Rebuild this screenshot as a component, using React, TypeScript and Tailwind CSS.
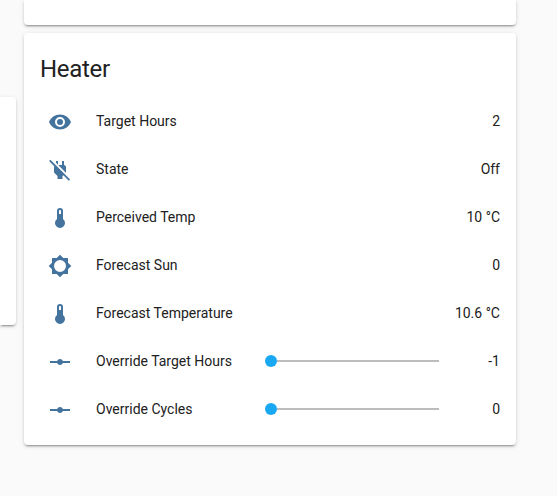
type RowData = { icon: string; name: string; value: string; slider?: boolean };

const EYE =
  'M12,9A3,3 0 0,0 9,12A3,3 0 0,0 12,15A3,3 0 0,0 15,12A3,3 0 0,0 12,9M12,17A5,5 0 0,1 7,12A5,5 0 0,1 12,7A5,5 0 0,1 17,12A5,5 0 0,1 12,17M12,4.5C7,4.5 2.73,7.61 1,12C2.73,16.39 7,19.5 12,19.5C17,19.5 21.27,16.39 23,12C21.27,7.61 17,4.5 12,4.5Z';
const PLUG_OFF =
  'M20.84 22.73L15.31 17.2L14.5 18V21H9.5V18L6 14.5V9C6 8.7 6.1 8.41 6.25 8.14L1.11 3L2.39 1.73L22.11 21.46L20.84 22.73M18 14.5V9C18 8 17 7 16 7V3H14V7H10.2L17.85 14.65L18 14.5M10 3H8V4.8L10 6.8V3Z';
const THERMOMETER =
  'M15 13V5A3 3 0 0 0 9 5V13A5 5 0 1 0 15 13M12 4A1 1 0 0 1 13 5V8H11V5A1 1 0 0 1 12 4Z';
const BRIGHTNESS =
  'M12,18A6,6 0 0,1 6,12A6,6 0 0,1 12,6A6,6 0 0,1 18,12A6,6 0 0,1 12,18M20,15.31L23.31,12L20,8.69V4H15.31L12,0.69L8.69,4H4V8.69L0.69,12L4,15.31V20H8.69L12,23.31L15.31,20H20V15.31Z';
const RAY_VERTEX =
  'M2,11H9.17C9.58,9.83 10.69,9 12,9C13.31,9 14.42,9.83 14.83,11H22V13H14.83C14.42,14.17 13.31,15 12,15C10.69,15 9.58,14.17 9.17,13H2V11Z';

const rows: RowData[] = [
  { icon: EYE, name: 'Target Hours', value: '2' },
  { icon: PLUG_OFF, name: 'State', value: 'Off' },
  { icon: THERMOMETER, name: 'Perceived Temp', value: '10 °C' },
  { icon: BRIGHTNESS, name: 'Forecast Sun', value: '0' },
  { icon: THERMOMETER, name: 'Forecast Temperature', value: '10.6 °C' },
  { icon: RAY_VERTEX, name: 'Override Target Hours', value: '-1', slider: true },
  { icon: RAY_VERTEX, name: 'Override Cycles', value: '0', slider: true },
];

const card =
  'bg-white shadow-[0_2px_2px_0_rgba(0,0,0,0.14),0_1px_5px_0_rgba(0,0,0,0.12),0_3px_1px_-2px_rgba(0,0,0,0.2)]';

function Slider() {
  return (
    <div className="mr-[15px] flex w-[174px] items-center">
      <div className="size-3 rounded-full bg-[#1ba8f3]" />
      <div className="h-0.5 flex-1 bg-[#bdbdbd]" />
    </div>
  );
}

function Row({ icon, name, value, slider }: RowData) {
  return (
    <div className="flex h-10 items-center">
      <div className="flex w-10 justify-center">
        <svg viewBox="0 0 24 24" className="size-6 fill-[#44739e]">
          <path d={icon} fillRule="evenodd" />
        </svg>
      </div>
      <div className="ml-4 flex flex-1 items-center pb-0.5">
        <div className="flex-1 whitespace-nowrap">{name}</div>
        {slider && <Slider />}
        <div className={slider ? 'w-[46px] text-right' : 'text-right'}>{value}</div>
      </div>
    </div>
  );
}

export default function App() {
  return (
    <div className="flex h-[496px] w-[557px] gap-2 overflow-hidden bg-[#fafafa] font-[Roboto,sans-serif] text-sm leading-5 text-[#212121]">
      <div className={`mt-[97px] h-[228px] w-4 shrink-0 rounded-r ${card}`} />
      <div className="flex w-[492px] shrink-0 flex-col gap-2">
        <div className={`h-[25px] rounded-b ${card}`} />
        <div className={`h-[412px] rounded px-4 ${card}`}>
          <h1 className="pt-5 text-2xl leading-8 tracking-[-0.012em]">Heater</h1>
          <div className="mt-[17px] flex flex-col gap-2">
            {rows.map((r) => (
              <Row key={r.name} {...r} />
            ))}
          </div>
        </div>
      </div>
    </div>
  );
}
